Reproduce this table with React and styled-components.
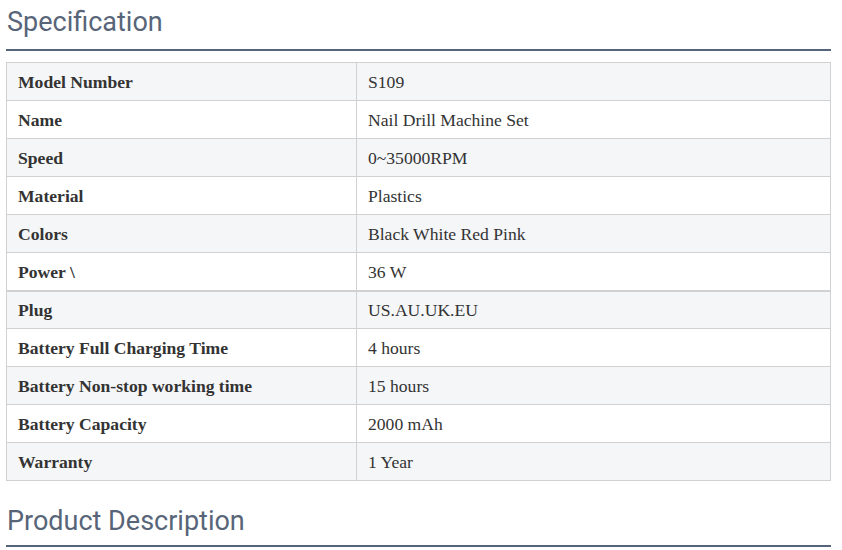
import React from "react";
import styled, { createGlobalStyle } from "styled-components";

const Global = createGlobalStyle`
  html, body { margin: 0; padding: 0; background: #fff; }
  body { font-family: "Liberation Serif", serif; }
`;

const Page = styled.div`
  width: 825px;
  padding: 0 0 0 6px;
`;

const Heading = styled.h2`
  margin: 0;
  padding: 6px 0 ${(p) => (p.$tight ? "8px" : "11px")} 1px;
  font-family: Roboto, "Noto Sans", sans-serif;
  font-weight: 400;
  font-size: 27px;
  line-height: 32px;
  color: #586579;
  border-bottom: 2px solid #56647a;
`;

const Table = styled.table`
  width: 100%;
  border-collapse: collapse;
  margin: 11px 0 18px;
  font-family: "Liberation Serif", serif;
  font-size: 17.6px;
  color: #333;
`;

const Row = styled.tr`
  background: ${(p) => (p.$alt ? "#f5f6f8" : "#fff")};
`;

const Cell = styled.td`
  border: 1px solid #d1d1d1;
  border-bottom-width: ${(p) => (p.$thick ? "2px" : "1px")};
  height: 38px;
  padding: 2px 11px 0;
  box-sizing: border-box;
  vertical-align: middle;
  font-weight: ${(p) => (p.$label ? 700 : 400)};
  width: ${(p) => (p.$label ? "350px" : "auto")};
`;

const rows = [
  ["Model Number", "S109"],
  ["Name", "Nail Drill Machine Set"],
  ["Speed", "0~35000RPM"],
  ["Material", "Plastics"],
  ["Colors", "Black White Red Pink"],
  ["Power \\", "36 W"],
  ["Plug", "US.AU.UK.EU"],
  ["Battery Full Charging Time", "4 hours"],
  ["Battery Non-stop working time", "15 hours"],
  ["Battery Capacity", "2000 mAh"],
  ["Warranty", "1 Year"],
];

export default function App() {
  return (
    <>
      <Global />
      <Page>
        <Heading>Specification</Heading>
        <Table>
          <tbody>
            {rows.map(([k, v], i) => (
              <Row key={k} $alt={i % 2 === 0}>
                <Cell $label $thick={i === 5}>{k}</Cell>
                <Cell $thick={i === 5}>{v}</Cell>
              </Row>
            ))}
          </tbody>
        </Table>
        <Heading $tight>Product Description</Heading>
      </Page>
    </>
  );
}
